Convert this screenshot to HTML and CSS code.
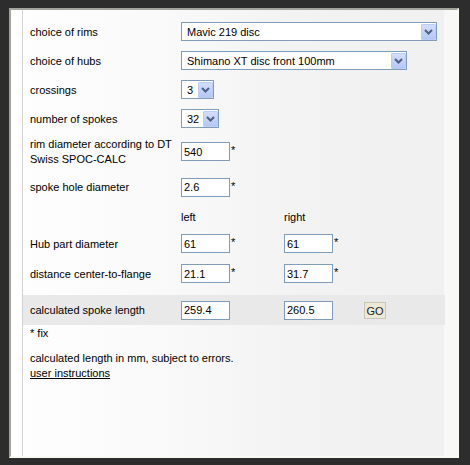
FILE: index.html
```html
<!DOCTYPE html>
<html>
<head>
<meta charset="utf-8">
<link rel="stylesheet" href="styles.css">
</head>
<body>
<div class="panel">
  <div class="gutter"></div>
  <div class="main">
    <div class="row h29">
      <div class="lbl">choice of rims</div>
      <div class="wide"><div class="sel w-rim"><span class="val">Mavic 219 disc</span><span class="btn"><svg width="9" height="6" viewBox="0 0 9 6"><path d="M1 1l3.5 3.5L8 1" stroke="#4d6185" stroke-width="2" fill="none"/></svg></span></div></div>
    </div>
    <div class="row h29">
      <div class="lbl">choice of hubs</div>
      <div class="wide"><div class="sel w-hub"><span class="val">Shimano XT disc front 100mm</span><span class="btn"><svg width="9" height="6" viewBox="0 0 9 6"><path d="M1 1l3.5 3.5L8 1" stroke="#4d6185" stroke-width="2" fill="none"/></svg></span></div></div>
    </div>
    <div class="row h29">
      <div class="lbl">crossings</div>
      <div class="wide"><div class="sel w-cross"><span class="val">3</span><span class="btn"><svg width="9" height="6" viewBox="0 0 9 6"><path d="M1 1l3.5 3.5L8 1" stroke="#4d6185" stroke-width="2" fill="none"/></svg></span></div></div>
    </div>
    <div class="row h29">
      <div class="lbl">number of spokes</div>
      <div class="wide"><div class="sel w-spk"><span class="val">32</span><span class="btn"><svg width="9" height="6" viewBox="0 0 9 6"><path d="M1 1l3.5 3.5L8 1" stroke="#4d6185" stroke-width="2" fill="none"/></svg></span></div></div>
    </div>
    <div class="row h37">
      <div class="lbl two">rim diameter according to DT Swiss SPOC-CALC</div>
      <div class="cell"><input class="inp" value="540"><span class="ast">*</span></div>
    </div>
    <div class="row h34">
      <div class="lbl">spoke hole diameter</div>
      <div class="cell"><input class="inp" value="2.6"><span class="ast">*</span></div>
    </div>
    <div class="row h25">
      <div class="lbl"></div>
      <div class="cell">left</div>
      <div class="cell">right</div>
    </div>
    <div class="row h29">
      <div class="lbl">Hub part diameter</div>
      <div class="cell"><input class="inp" value="61"><span class="ast">*</span></div>
      <div class="cell"><input class="inp" value="61"><span class="ast">*</span></div>
    </div>
    <div class="row h31">
      <div class="lbl">distance center-to-flange</div>
      <div class="cell"><input class="inp" value="21.1"><span class="ast">*</span></div>
      <div class="cell"><input class="inp" value="31.7"><span class="ast">*</span></div>
    </div>
    <div class="row band">
      <div class="lbl">calculated spoke length</div>
      <div class="cell"><input class="inp" value="259.4"></div>
      <div class="cell"><input class="inp" value="260.5"></div>
      <div class="cell"><button class="go">GO</button></div>
    </div>
    <div class="note">* fix</div>
    <div class="foot">
      <div>calculated length in mm, subject to errors.</div>
      <a class="link" href="#">user instructions</a>
    </div>
  </div>
</div>
</body>
</html>
```
FILE: styles.css
```css
body {
  margin: 0;
  background: #2d2d2d;
  font-family: "Liberation Sans", Arial, sans-serif;
  font-size: 11px;
  color: #000;
}
.panel {
  margin: 8px 0 0 9px;
  width: 446px;
  height: 446px;
  border: 2px solid;
  border-color: #a3a39b #fafaf2 #fafaf2 #a3a39b;
  background: #fff;
  display: flex;
}
.gutter {
  width: 11px;
  border-right: 1px solid #d2d2d2;
  background: #fff;
}
.main {
  flex: 1;
  padding-top: 7px;
  background: linear-gradient(to right, #fefefe 0%, #f8f8f8 40%, #f3f3f3 60%, #f0f0f0 97%, #f8f8f8 97%, #f8f8f8 100%);
}
.row {
  display: grid;
  grid-template-columns: 151px 103px 80px 1fr;
  align-items: center;
  padding-left: 7px;
}
.h25 { height: 25px; }
.h29 { height: 29px; }
.h31 { height: 31px; }
.h34 { height: 34px; }
.h37 { height: 37px; }
.lbl.two { line-height: 15px; padding-right: 8px; }
.wide { grid-column: 2 / 5; }
.cell { display: flex; align-items: center; }
.sel {
  display: flex;
  align-items: center;
  box-sizing: border-box;
  height: 19px;
  border: 1px solid #7f9db9;
  background: #fff;
}
.w-rim { width: 256px; }
.w-hub { width: 226px; }
.w-cross { width: 33px; }
.w-spk { width: 38px; }
.sel .val { flex: 1; padding-left: 5px; white-space: nowrap; }
.sel .btn {
  box-sizing: border-box;
  width: 15px;
  height: 16px;
  margin-right: 0;
  background: linear-gradient(#d2defc, #b4c7f5);
  border: 1px solid #bccdf5;
  border-radius: 1px;
  display: flex;
  align-items: center;
  justify-content: center;
}
.inp {
  box-sizing: border-box;
  width: 49px;
  height: 19px;
  margin: 0;
  padding: 0 0 0 2px;
  border: 1px solid #7f9db9;
  background: #fff;
  font-family: "Liberation Sans", Arial, sans-serif;
  font-size: 11px;
  color: #000;
}
.ast { margin-left: 1px; margin-top: -3px; }
.band {
  height: 30px;
  margin-top: 6px;
  margin-right: 12px;
  background: #e9e9e9;
}
.go {
  box-sizing: border-box;
  width: 22px;
  height: 17px;
  margin: 1px 0 0 0;
  padding: 0;
  border: 1px solid #c9c6b4;
  background: #ece9d8;
  font-family: "Liberation Sans", Arial, sans-serif;
  font-size: 11px;
  color: #222;
}
.note {
  padding-left: 7px;
  height: 16px;
  line-height: 16px;
}
.foot {
  padding-left: 7px;
  margin-top: 10px;
  line-height: 15px;
}
.link { color: #000; text-decoration: underline; }
```
